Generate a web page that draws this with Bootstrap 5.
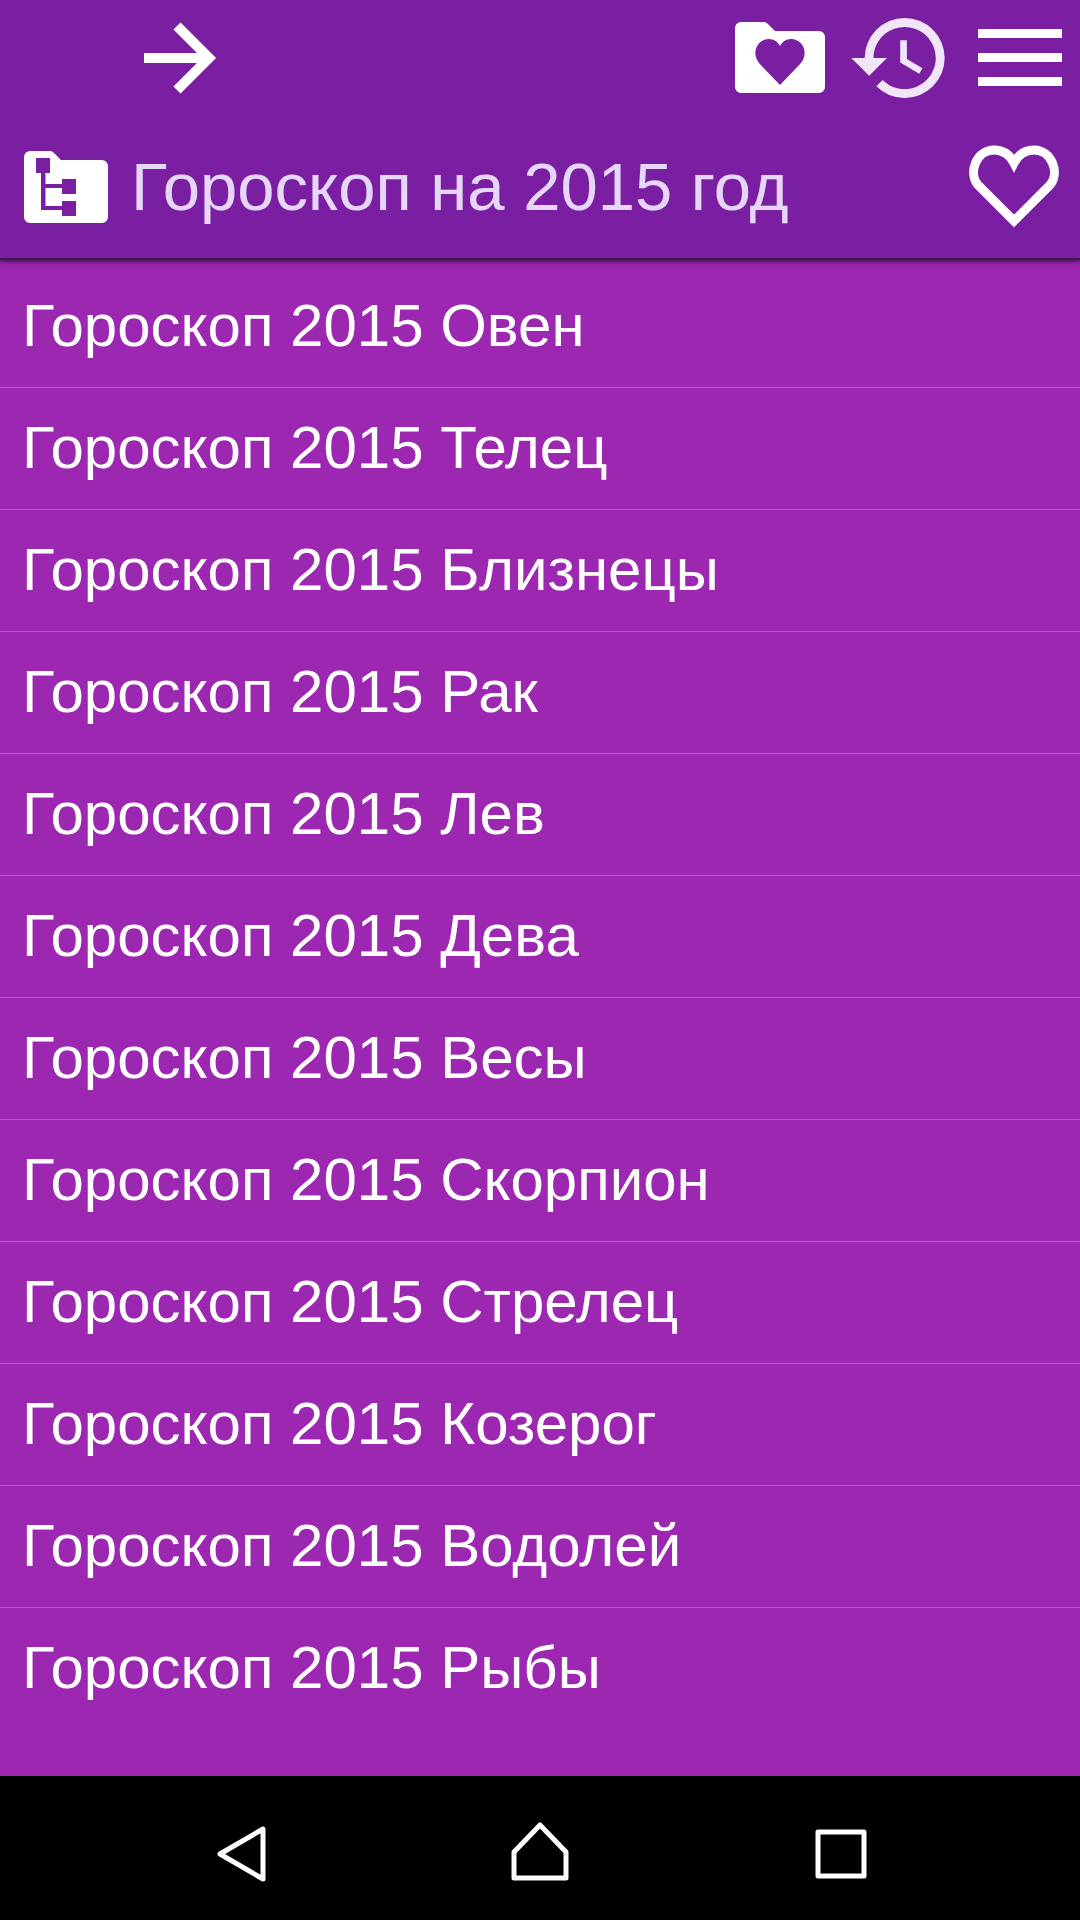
<!DOCTYPE html>
<html lang="ru">
<head>
  <meta charset="UTF-8">
  <meta name="viewport" content="width=device-width, initial-scale=1.0">
  <title>Гороскоп на 2015 год</title>
  <link href="https://cdn.jsdelivr.net/npm/bootstrap@5.3.0/dist/css/bootstrap.min.css" rel="stylesheet">
  <style>
    body { font-family: "Liberation Sans", Arial, sans-serif; background: #9c27b0; height: 1920px; overflow: hidden; }
    .app-head { background: #7b1fa2; height: 258px; position: relative; z-index: 2; box-shadow: 0 2px 0 #3a1a4a, 0 4px 4px rgba(40,10,55,.7); }
    .head-top { height: 115px; padding: 0 18px 0 144px; }
    .head-title { height: 143px; padding: 0 21px 0 24px; }
    .head-title span { color: #e6d6f8; font-size: 67px; line-height: 1; margin-left: 23px; }
    .ic-back { margin-right: auto; }
    .ic-fav { margin-right: 26px; }
    .ic-hist { margin-right: 33px; }
    .topic-list { margin-top: 8px; --bs-list-group-bg: transparent; --bs-list-group-border-color: #c05ad2; --bs-list-group-color: #fff; }
    .topic-list .list-group-item { height: 122px; padding: 0 22px; font-size: 60px; line-height: 120px; background: transparent; color: #fff; border-bottom: 1px solid #c05ad2; }
    .sys-bar { height: 144px; background: #000; position: absolute; left: 0; right: 0; bottom: 0; }
    .sys-bar svg { position: absolute; }
    .sys-back { left: 214px; top: 47px; }
    .sys-home { left: 510px; top: 44px; }
    .sys-recent { left: 814px; top: 52px; }
  </style>
</head>
<body>
<header class="app-head">
  <div class="head-top d-flex align-items-center">
    <svg class="ic-back" width="73" height="72" viewBox="0 0 73 72"><path d="M0 36H64M33 4l32 32-32 32" fill="none" stroke="#fff" stroke-width="10"/></svg>
    <svg class="ic-fav" width="90" height="71" viewBox="0 0 90 71">
      <path d="M6 0H29a6 6 0 0 1 4 2l7 7H84a6 6 0 0 1 6 6V65a6 6 0 0 1-6 6H6a6 6 0 0 1-6-6V6a6 6 0 0 1 6-6Z" fill="#fff"/>
      <path transform="translate(20 17)" d="M25 46 4 24C-4 14 2 0 14 0c5 0 9 3 11 7 2-4 6-7 11-7 12 0 18 14 10 24Z" fill="#7b1fa2"/>
    </svg>
    <svg class="ic-hist" width="94" height="80" viewBox="1 3 21 18"><path d="M13 3a9 9 0 0 0-9 9H1l3.89 3.89.07.14L9 12H6c0-3.87 3.13-7 7-7s7 3.13 7 7-3.13 7-7 7c-1.93 0-3.68-.79-4.94-2.06l-1.42 1.42A8.954 8.954 0 0 0 13 21a9 9 0 0 0 0-18zm-1 5v5l4.28 2.54.72-1.21-3.5-2.08V8H12z" fill="#f0e6f8"/></svg>
    <svg width="84" height="57" viewBox="0 0 84 57"><path d="M0 0h84v9H0zM0 24h84v9H0zM0 48h84v9H0z" fill="#fff"/></svg>
  </div>
  <div class="head-title d-flex align-items-center">
    <svg width="84" height="72" viewBox="0 0 84 72">
      <path d="M6 0H26a6 6 0 0 1 4 2l7 7H78a6 6 0 0 1 6 6V66a6 6 0 0 1-6 6H6a6 6 0 0 1-6-6V6a6 6 0 0 1 6-6Z" fill="#fff"/>
      <path d="M12 7h14v15H12zM38 28h14v15H38zM38 50h14v15H38zM17 22h4.500V33H38v4H21.500V55H38v4H17Z" fill="#7b1fa2"/>
    </svg>
    <span class="flex-grow-1">Гороскоп на 2015 год</span>
    <svg width="90" height="83" viewBox="0 0 90 83"><path d="M45 76 9 40C-1 28 7 5 25 5c9 0 16 5 20 13 4-8 11-13 20-13 18 0 26 23 16 35Z" fill="none" stroke="#fff" stroke-width="9"/></svg>
  </div>
</header>
<div class="list-group list-group-flush rounded-0 topic-list">
  <div class="list-group-item">Гороскоп 2015 Овен</div>
  <div class="list-group-item">Гороскоп 2015 Телец</div>
  <div class="list-group-item">Гороскоп 2015 Близнецы</div>
  <div class="list-group-item">Гороскоп 2015 Рак</div>
  <div class="list-group-item">Гороскоп 2015 Лев</div>
  <div class="list-group-item">Гороскоп 2015 Дева</div>
  <div class="list-group-item">Гороскоп 2015 Весы</div>
  <div class="list-group-item">Гороскоп 2015 Скорпион</div>
  <div class="list-group-item">Гороскоп 2015 Стрелец</div>
  <div class="list-group-item">Гороскоп 2015 Козерог</div>
  <div class="list-group-item">Гороскоп 2015 Водолей</div>
  <div class="list-group-item">Гороскоп 2015 Рыбы</div>
</div>
<nav class="sys-bar">
  <svg class="sys-back" width="54" height="62" viewBox="0 0 54 62"><path d="M49 6V56L6 31Z" transform="translate(0 0)" fill="none" stroke="#fff" stroke-width="5" stroke-linejoin="round"/></svg>
  <svg class="sys-home" width="60" height="62" viewBox="0 0 60 62"><path d="M30 5 4 32V58H56V32Z" fill="none" stroke="#fff" stroke-width="5" stroke-linejoin="round"/></svg>
  <svg class="sys-recent" width="54" height="52" viewBox="0 0 54 52"><path d="M4 4H50V48H4Z" fill="none" stroke="#fff" stroke-width="5" stroke-linejoin="round"/></svg>
</nav>
<script src="https://cdn.jsdelivr.net/npm/bootstrap@5.3.0/dist/js/bootstrap.bundle.min.js"></script>
</body>
</html>
